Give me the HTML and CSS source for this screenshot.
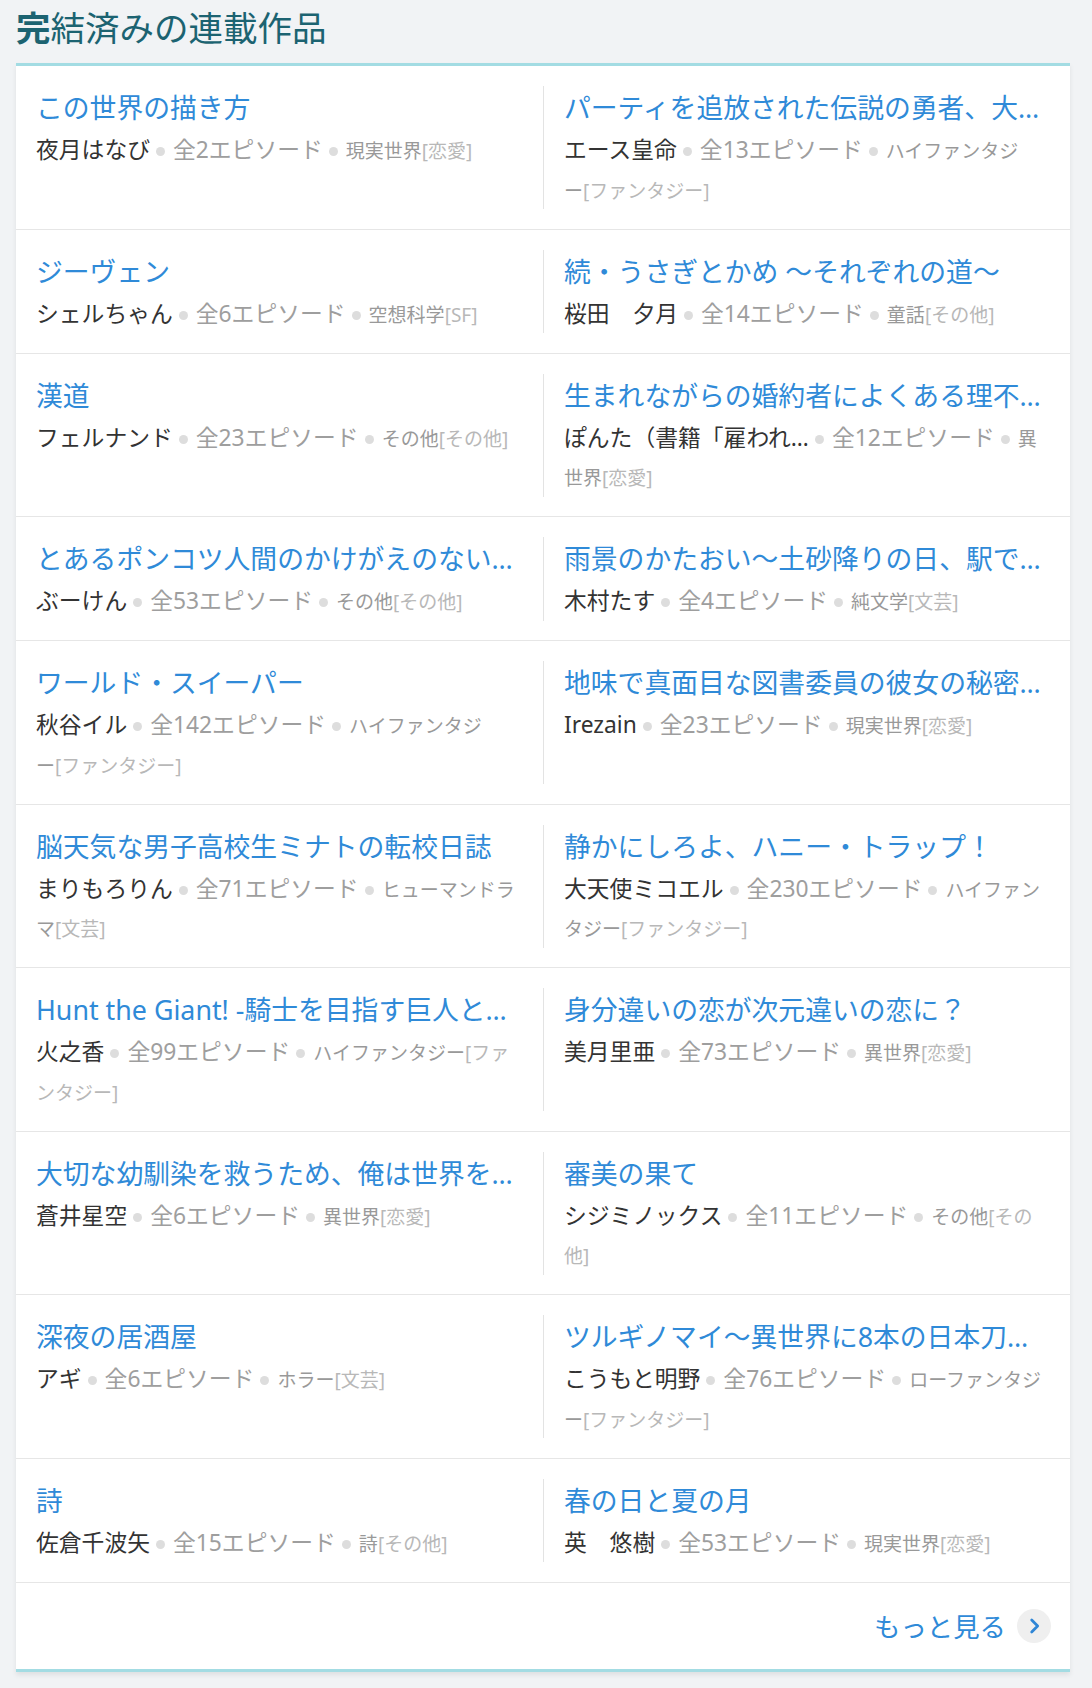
FILE: index.html
```html
<!DOCTYPE html>
<html lang="ja">
<head>
<meta charset="utf-8">
<title>完結済みの連載作品</title>
<link rel="stylesheet" href="styles.css">
</head>
<body>
<div class="page">
  <h2 class="heading"><span class="heading-first">完</span>結済みの連載作品</h2>
  <div class="card">
    <div class="row">
      <div class="cell">
        <a class="title">この世界の描き方</a>
        <p class="meta"><span class="author">夜月はなび</span><i class="dot"></i><span class="count">全2エピソード</span><i class="dot"></i><span class="genre">現実世界</span><span class="tag">[恋愛]</span></p>
      </div>
      <div class="cell">
        <a class="title">パーティを追放された伝説の勇者、大…</a>
        <p class="meta"><span class="author">エース皇命</span><i class="dot"></i><span class="count">全13エピソード</span><i class="dot"></i><span class="genre">ハイファンタジ<br>ー</span><span class="tag">[ファンタジー]</span></p>
      </div>
    </div>
    <div class="row">
      <div class="cell">
        <a class="title">ジーヴェン</a>
        <p class="meta"><span class="author">シェルちゃん</span><i class="dot"></i><span class="count">全6エピソード</span><i class="dot"></i><span class="genre">空想科学</span><span class="tag">[SF]</span></p>
      </div>
      <div class="cell">
        <a class="title">続・うさぎとかめ ～それぞれの道～</a>
        <p class="meta"><span class="author">桜田　夕月</span><i class="dot"></i><span class="count">全14エピソード</span><i class="dot"></i><span class="genre">童話</span><span class="tag">[その他]</span></p>
      </div>
    </div>
    <div class="row">
      <div class="cell">
        <a class="title">漢道</a>
        <p class="meta"><span class="author">フェルナンド</span><i class="dot"></i><span class="count">全23エピソード</span><i class="dot"></i><span class="genre">その他</span><span class="tag">[その他]</span></p>
      </div>
      <div class="cell">
        <a class="title">生まれながらの婚約者によくある理不…</a>
        <p class="meta"><span class="author">ぽんた（書籍「雇われ…</span><i class="dot"></i><span class="count">全12エピソード</span><i class="dot"></i><span class="genre">異<br>世界</span><span class="tag">[恋愛]</span></p>
      </div>
    </div>
    <div class="row">
      <div class="cell">
        <a class="title">とあるポンコツ人間のかけがえのない…</a>
        <p class="meta"><span class="author">ぶーけん</span><i class="dot"></i><span class="count">全53エピソード</span><i class="dot"></i><span class="genre">その他</span><span class="tag">[その他]</span></p>
      </div>
      <div class="cell">
        <a class="title">雨景のかたおい〜土砂降りの日、駅で…</a>
        <p class="meta"><span class="author">木村たす</span><i class="dot"></i><span class="count">全4エピソード</span><i class="dot"></i><span class="genre">純文学</span><span class="tag">[文芸]</span></p>
      </div>
    </div>
    <div class="row">
      <div class="cell">
        <a class="title">ワールド・スイーパー</a>
        <p class="meta"><span class="author">秋谷イル</span><i class="dot"></i><span class="count">全142エピソード</span><i class="dot"></i><span class="genre">ハイファンタジ<br>ー</span><span class="tag">[ファンタジー]</span></p>
      </div>
      <div class="cell">
        <a class="title">地味で真面目な図書委員の彼女の秘密…</a>
        <p class="meta"><span class="author">Irezain</span><i class="dot"></i><span class="count">全23エピソード</span><i class="dot"></i><span class="genre">現実世界</span><span class="tag">[恋愛]</span></p>
      </div>
    </div>
    <div class="row">
      <div class="cell">
        <a class="title">脳天気な男子高校生ミナトの転校日誌</a>
        <p class="meta"><span class="author">まりもろりん</span><i class="dot"></i><span class="count">全71エピソード</span><i class="dot"></i><span class="genre">ヒューマンドラ<br>マ</span><span class="tag">[文芸]</span></p>
      </div>
      <div class="cell">
        <a class="title">静かにしろよ、ハニー・トラップ！</a>
        <p class="meta"><span class="author">大天使ミコエル</span><i class="dot"></i><span class="count">全230エピソード</span><i class="dot"></i><span class="genre">ハイファン<br>タジー</span><span class="tag">[ファンタジー]</span></p>
      </div>
    </div>
    <div class="row">
      <div class="cell">
        <a class="title">Hunt the Giant! -騎士を目指す巨人と…</a>
        <p class="meta"><span class="author">火之香</span><i class="dot"></i><span class="count">全99エピソード</span><i class="dot"></i><span class="genre">ハイファンタジー</span><span class="tag">[ファ<br>ンタジー]</span></p>
      </div>
      <div class="cell">
        <a class="title">身分違いの恋が次元違いの恋に？</a>
        <p class="meta"><span class="author">美月里亜</span><i class="dot"></i><span class="count">全73エピソード</span><i class="dot"></i><span class="genre">異世界</span><span class="tag">[恋愛]</span></p>
      </div>
    </div>
    <div class="row">
      <div class="cell">
        <a class="title">大切な幼馴染を救うため、俺は世界を…</a>
        <p class="meta"><span class="author">蒼井星空</span><i class="dot"></i><span class="count">全6エピソード</span><i class="dot"></i><span class="genre">異世界</span><span class="tag">[恋愛]</span></p>
      </div>
      <div class="cell">
        <a class="title">審美の果て</a>
        <p class="meta"><span class="author">シジミノックス</span><i class="dot"></i><span class="count">全11エピソード</span><i class="dot"></i><span class="genre">その他</span><span class="tag">[その<br>他]</span></p>
      </div>
    </div>
    <div class="row">
      <div class="cell">
        <a class="title">深夜の居酒屋</a>
        <p class="meta"><span class="author">アギ</span><i class="dot"></i><span class="count">全6エピソード</span><i class="dot"></i><span class="genre">ホラー</span><span class="tag">[文芸]</span></p>
      </div>
      <div class="cell">
        <a class="title">ツルギノマイ〜異世界に8本の日本刀…</a>
        <p class="meta"><span class="author">こうもと明野</span><i class="dot"></i><span class="count">全76エピソード</span><i class="dot"></i><span class="genre">ローファンタジ<br>ー</span><span class="tag">[ファンタジー]</span></p>
      </div>
    </div>
    <div class="row">
      <div class="cell">
        <a class="title">詩</a>
        <p class="meta"><span class="author">佐倉千波矢</span><i class="dot"></i><span class="count">全15エピソード</span><i class="dot"></i><span class="genre">詩</span><span class="tag">[その他]</span></p>
      </div>
      <div class="cell">
        <a class="title">春の日と夏の月</a>
        <p class="meta"><span class="author">英　悠樹</span><i class="dot"></i><span class="count">全53エピソード</span><i class="dot"></i><span class="genre">現実世界</span><span class="tag">[恋愛]</span></p>
      </div>
    </div>
    <div class="more-bar">
      <a class="more">もっと見る<span class="more-icon"><svg viewBox="0 0 24 24" width="22" height="22"><path d="M9.5 5.5l6.5 6.5-6.5 6.5" fill="none" stroke="#2f86d6" stroke-width="3" stroke-linecap="round" stroke-linejoin="round"/></svg></span></a>
    </div>
  </div>
</div>
</body>
</html>
```

FILE: styles.css
```css
html, body {
  margin: 0;
  padding: 0;
  background: #f1f3f5;
}

body {
  font-family: "Noto Sans", "Noto Sans CJK JP", sans-serif;
  color: #333;
}

.page {
  padding: 0 22px 19px 16px;
}

.heading {
  margin: 0;
  padding: 0 0 7px;
  font-size: 34.5px;
  line-height: 56px;
  font-weight: normal;
  color: #1c6371;
  white-space: nowrap;
}

.heading-first {
  font-weight: bold;
}

.card {
  background: #fff;
  border-top: 3px solid #a3dce3;
  border-bottom: 3px solid #a3dce3;
  box-shadow: 0 3px 5px rgba(0, 0, 0, 0.08);
}

.row {
  display: grid;
  grid-template-columns: 1fr 1fr;
  padding: 20px 0 19.5px;
  border-bottom: 1px solid #e6e6e6;
}

.cell {
  padding: 0 20px;
  min-width: 0;
}

.cell + .cell {
  border-left: 1px solid #e3e3e3;
}

.title {
  display: block;
  font-size: 26.8px;
  line-height: 44px;
  color: #2f8ad8;
  white-space: nowrap;
  overflow: hidden;
  text-overflow: ellipsis;
  text-decoration: none;
}

.meta {
  margin: 0;
  font-size: 22.8px;
  line-height: 39.5px;
}

.author {
  color: #333;
}

.dot {
  display: inline-block;
  width: 9px;
  height: 9px;
  border-radius: 50%;
  background: #dddddd;
  margin: 0 8px 0 6px;
  vertical-align: 2px;
}

.count {
  color: #9e9e9e;
}

.genre {
  font-size: 19px;
  line-height: 1;
  color: #999;
}

.tag {
  font-size: 19px;
  line-height: 1;
  color: #b8b8b8;
}

.more-bar {
  display: flex;
  justify-content: flex-end;
  align-items: center;
  height: 86px;
  padding-right: 19px;
}

.more {
  display: flex;
  align-items: center;
  gap: 11px;
  font-size: 26.4px;
  color: #2f8ad8;
  text-decoration: none;
}

.more-icon {
  display: flex;
  align-items: center;
  justify-content: center;
  width: 34px;
  height: 34px;
  border-radius: 50%;
  background: #efefef;
}
```
